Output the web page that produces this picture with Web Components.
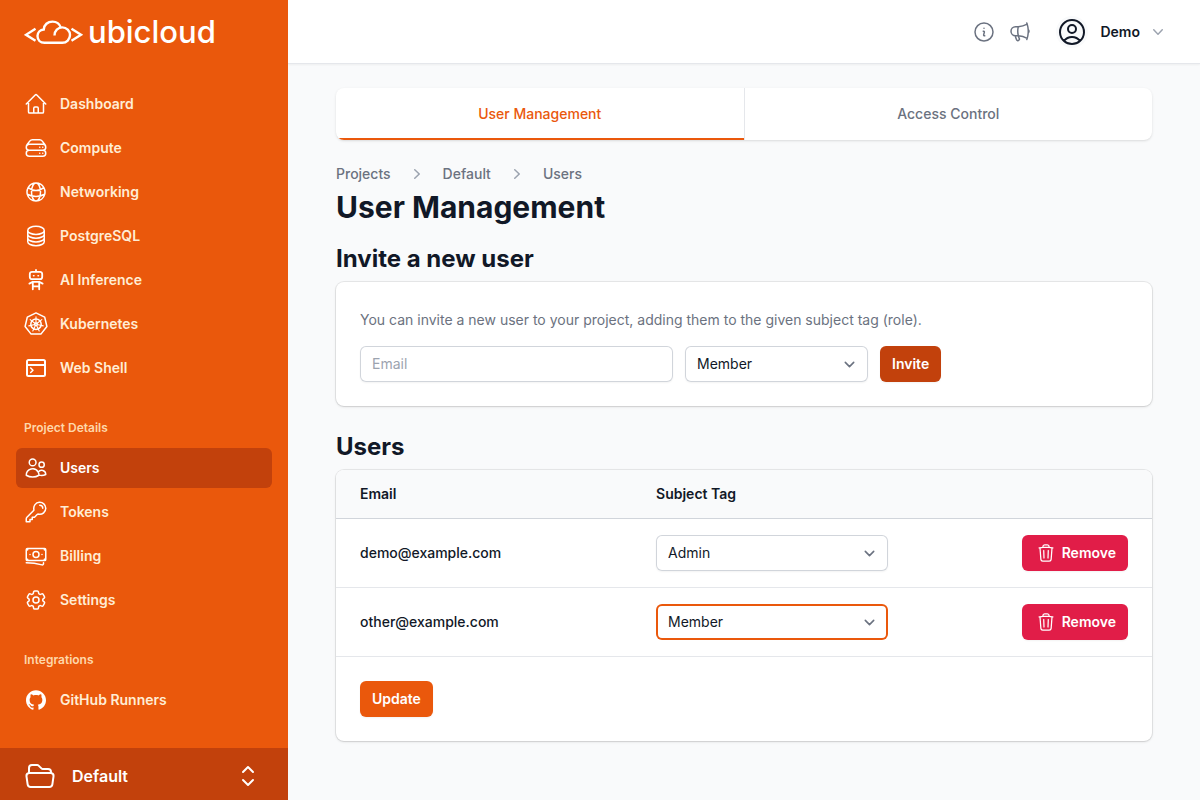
<!DOCTYPE html>
<html lang="en">
<head>
<meta charset="utf-8">
<meta name="viewport" content="width=device-width, initial-scale=1">
<title>Ubicloud - User Management</title>
<style>
body {
    margin: 0;
    background: #f9fafb;
    color: #111827;
    font: 400 14px/20px Inter, "Liberation Sans", sans-serif;
}
</style>
</head>
<body>
<app-shell>
    <side-bar slot="sidebar">
        <nav-group>
            <nav-item icon="home">Dashboard</nav-item>
            <nav-item icon="server">Compute</nav-item>
            <nav-item icon="globe">Networking</nav-item>
            <nav-item icon="database">PostgreSQL</nav-item>
            <nav-item icon="robot">AI Inference</nav-item>
            <nav-item icon="kubernetes">Kubernetes</nav-item>
            <nav-item icon="terminal">Web Shell</nav-item>
        </nav-group>
        <nav-group label="Project Details">
            <nav-item icon="users" active>Users</nav-item>
            <nav-item icon="key">Tokens</nav-item>
            <nav-item icon="banknotes">Billing</nav-item>
            <nav-item icon="cog">Settings</nav-item>
        </nav-group>
        <nav-group label="Integrations">
            <nav-item icon="github">GitHub Runners</nav-item>
        </nav-group>
        <project-switcher slot="footer">Default</project-switcher>
    </side-bar>
    <top-bar slot="header">Demo</top-bar>
    <tab-bar tabs="User Management,Access Control"></tab-bar>
    <page-title crumbs="Projects,Default,Users">User Management</page-title>
    <page-section>
        <span slot="title">Invite a new user</span>
        <invite-form></invite-form>
    </page-section>
    <page-section>
        <span slot="title">Users</span>
        <users-table></users-table>
    </page-section>
</app-shell>

<script>
// Outline icons are stroked, the ones marked solid are filled.
const icons = {
    home: { body: `<path d="M2.25 12l8.954-8.955c.44-.439 1.152-.439 1.591 0L21.75 12M4.5 9.75v10.125c0 .621.504 1.125 1.125 1.125H9.75v-4.875c0-.621.504-1.125 1.125-1.125h2.25c.621 0 1.125.504 1.125 1.125V21h4.125c.621 0 1.125-.504 1.125-1.125V9.75M8.25 21h8.25"/>` },
    server: { body: `<path d="M5.25 14.25h13.5m-13.5 0a3 3 0 01-3-3m3 3a3 3 0 100 6h13.5a3 3 0 100-6m-16.5-3a3 3 0 013-3h13.5a3 3 0 013 3m-19.5 0a4.5 4.5 0 01.9-2.7L5.737 5.1a3.375 3.375 0 012.7-1.35h7.126c1.062 0 2.062.5 2.7 1.35l2.587 3.45a4.5 4.5 0 01.9 2.7m0 0a3 3 0 01-3 3m0 3h.008v.008h-.008v-.008zm0-6h.008v.008h-.008v-.008zm-3 6h.008v.008h-.008v-.008zm0-6h.008v.008h-.008v-.008z"/>` },
    globe: { body: `<path d="M12 21a9.004 9.004 0 008.716-6.747M12 21a9.004 9.004 0 01-8.716-6.747M12 21c2.485 0 4.5-4.03 4.5-9S14.485 3 12 3m0 18c-2.485 0-4.5-4.03-4.5-9S9.515 3 12 3m0 0a8.997 8.997 0 017.843 4.582M12 3a8.997 8.997 0 00-7.843 4.582m15.686 0A11.953 11.953 0 0112 10.5c-2.998 0-5.74-1.1-7.843-2.918m15.686 0A8.959 8.959 0 0121 12c0 .778-.099 1.533-.284 2.253m0 0A17.919 17.919 0 0112 16.5c-3.162 0-6.133-.815-8.716-2.247m0 0A9.015 9.015 0 013 12c0-1.605.42-3.113 1.157-4.418"/>` },
    database: { body: `<path d="M20.25 6.375c0 2.278-3.694 4.125-8.25 4.125S3.75 8.653 3.75 6.375m16.5 0c0-2.278-3.694-4.125-8.25-4.125S3.75 4.097 3.75 6.375m16.5 0v11.25c0 2.278-3.694 4.125-8.25 4.125s-8.25-1.847-8.25-4.125V6.375m16.5 0v3.75m-16.5-3.75v3.75m16.5 0v3.75C20.25 16.153 16.556 18 12 18s-8.25-1.847-8.25-4.125v-3.75m16.5 0c0 2.278-3.694 4.125-8.25 4.125s-8.25-1.847-8.25-4.125"/>` },
    robot: { stroke: 1.8, body: `<path d="M12 2v1.500M8 3.800h8a2.200 2.200 0 012.200 2.200v3a2.200 2.200 0 01-2.200 2.200H8A2.200 2.200 0 015.800 9V6A2.200 2.200 0 018 3.800zM8.800 21.300v-7.500h6.400v7.500M8.800 18.300h6.400M8.800 13.800l-3.400 1.800M15.200 13.800l3.400 1.800"/><path stroke-width="1.500" d="M9.500 7.800h.5M14 7.800h.5"/>` },
    kubernetes: { body: `<path d="M12 .9l8.700 4.200 2.200 9.400-6 7.600H7.100l-6-7.600 2.200-9.400z"/><circle cx="12" cy="12.200" r="5.200"/><circle cx="12" cy="12.200" r="1.300"/><path stroke-width="1.100" d="M12 11V4.800M12.900 11.500l4.900-3.900M13.200 12.500l6 1.400M12.500 13.300l2.700 5.600M11.500 13.300l-2.700 5.600M10.800 12.500l-6 1.400M11.100 11.500L6.200 7.600"/>` },
    terminal: { stroke: 2, body: `<path d="M4.500 4h15A1.500 1.500 0 0121 5.500v13a1.500 1.500 0 01-1.500 1.500h-15A1.500 1.500 0 013 18.500v-13A1.500 1.500 0 014.500 4zM3 9h18"/><path stroke-width="1.500" d="M6.700 12l2.300 2.200-2.300 2.300"/>` },
    users: { body: `<path d="M15 19.128a9.38 9.38 0 002.625.372 9.337 9.337 0 004.121-.952 4.125 4.125 0 00-7.533-2.493M15 19.128v-.003c0-1.113-.285-2.16-.786-3.07M15 19.128v.106A12.318 12.318 0 018.624 21c-2.331 0-4.512-.645-6.374-1.766l-.001-.109a6.375 6.375 0 0111.964-3.07M12 6.375a3.375 3.375 0 11-6.75 0 3.375 3.375 0 016.75 0zm8.25 2.25a2.625 2.625 0 11-5.25 0 2.625 2.625 0 015.25 0z"/>` },
    key: { body: `<path d="M15.75 5.25a3 3 0 013 3m3 0a6 6 0 01-7.029 5.912c-.563-.097-1.159.026-1.563.43L10.5 17.25H8.25v2.25H6v2.25H2.25v-2.818c0-.597.237-1.17.659-1.591l6.499-6.499c.404-.404.527-1 .43-1.563A6 6 0 1121.75 8.25z"/>` },
    banknotes: { body: `<path d="M2.25 18.75a60.07 60.07 0 0115.797 2.101c.727.198 1.453-.342 1.453-1.096V18.75M3.75 4.5v.75A.75.75 0 013 6h-.75m0 0v-.375c0-.621.504-1.125 1.125-1.125H20.25M2.25 6v9m18-10.5v.75c0 .414.336.75.75.75h.75m-1.5-1.5h.375c.621 0 1.125.504 1.125 1.125v9.75c0 .621-.504 1.125-1.125 1.125h-.375m1.5-1.5H21a.75.75 0 00-.75.75v.75m0 0H3.75m0 0h-.375a1.125 1.125 0 01-1.125-1.125V15m1.5 1.5v-.75A.75.75 0 003 15h-.75M15 10.5a3 3 0 11-6 0 3 3 0 016 0zm3 0h.008v.008H18V10.5zm-12 0h.008v.008H6V10.5z"/>` },
    cog: { body: `<path d="M9.594 3.94c.09-.542.56-.94 1.11-.94h2.593c.55 0 1.02.398 1.11.94l.213 1.281c.063.374.313.686.645.87.074.04.147.083.22.127.324.196.72.257 1.075.124l1.217-.456a1.125 1.125 0 011.37.49l1.296 2.247a1.125 1.125 0 01-.26 1.431l-1.003.827c-.293.24-.438.613-.431.992a6.759 6.759 0 010 .255c-.007.378.138.75.43.99l1.005.828c.424.35.534.954.26 1.43l-1.298 2.247a1.125 1.125 0 01-1.369.491l-1.217-.456c-.355-.133-.75-.072-1.076.124a6.57 6.57 0 01-.22.128c-.331.183-.581.495-.644.869l-.213 1.28c-.09.543-.56.941-1.11.941h-2.594c-.55 0-1.02-.398-1.11-.94l-.213-1.281c-.062-.374-.312-.686-.644-.87a6.52 6.52 0 01-.22-.127c-.325-.196-.72-.257-1.076-.124l-1.217.456a1.125 1.125 0 01-1.369-.49l-1.297-2.247a1.125 1.125 0 01.26-1.431l1.004-.827c.292-.24.437-.613.43-.992a6.932 6.932 0 010-.255c.007-.378-.138-.75-.43-.99l-1.004-.828a1.125 1.125 0 01-.26-1.43l1.297-2.247a1.125 1.125 0 011.37-.491l1.216.456c.356.133.751.072 1.076-.124.072-.044.146-.087.22-.128.332-.183.582-.495.644-.869l.214-1.281z"/><path d="M15 12a3 3 0 11-6 0 3 3 0 016 0z"/>` },
    github: { solid: true, box: "-2.4 -2.4 28.8 28.8", body: `<path d="M12 .297c-6.630 0-12 5.373-12 12 0 5.303 3.438 9.800 8.205 11.385.6.113.82-.258.82-.577 0-.285-.010-1.040-.015-2.040-3.338.724-4.042-1.610-4.042-1.610C4.422 18.070 3.633 17.700 3.633 17.700c-1.087-.744.084-.729.084-.729 1.205.084 1.838 1.236 1.838 1.236 1.070 1.835 2.809 1.305 3.495.998.108-.776.417-1.305.760-1.605-2.665-.3-5.466-1.332-5.466-5.930 0-1.310.465-2.380 1.235-3.220-.135-.303-.540-1.523.105-3.176 0 0 1.005-.322 3.300 1.230.960-.267 1.980-.399 3-.405 1.020.006 2.040.138 3 .405 2.280-1.552 3.285-1.230 3.285-1.230.645 1.653.240 2.873.120 3.176.765.840 1.230 1.910 1.230 3.220 0 4.610-2.805 5.625-5.475 5.920.420.360.810 1.096.810 2.220 0 1.606-.015 2.896-.015 3.286 0 .315.210.690.825.570C20.565 22.092 24 17.592 24 12.297c0-6.627-5.373-12-12-12"/>` },
    folder: { body: `<path d="M3.75 9.776c.112-.017.227-.026.344-.026h15.812c.117 0 .232.009.344.026m-16.5 0a2.25 2.25 0 00-1.883 2.542l.857 6a2.25 2.25 0 002.227 1.932H19.05a2.25 2.25 0 002.227-1.932l.857-6a2.25 2.25 0 00-1.883-2.542m-16.5 0V6A2.25 2.25 0 016 3.75h3.879a1.5 1.5 0 011.06.44l2.122 2.12a1.5 1.5 0 001.06.44H18A2.25 2.25 0 0120.25 9v.776"/>` },
    "up-down": { body: `<path d="M8.25 15L12 18.75 15.75 15m-7.5-6L12 5.25 15.75 9"/>` },
    info: { body: `<path d="M11.25 11.25l.041-.02a.75.75 0 011.063.852l-.708 2.836a.75.75 0 001.063.853l.041-.021M21 12a9 9 0 11-18 0 9 9 0 0118 0zm-9-3.75h.008v.008H12V8.25z"/>` },
    megaphone: { body: `<path d="M10.34 15.84c-.688-.06-1.386-.09-2.09-.09H7.5a4.5 4.5 0 110-9h.75c.704 0 1.402-.03 2.09-.09m0 9.18c.253.962.584 1.892.985 2.783.247.55.06 1.21-.463 1.511l-.657.38c-.551.318-1.26.117-1.527-.461a20.845 20.845 0 01-1.44-4.282m3.102.069a18.03 18.03 0 01-.59-4.59c0-1.586.205-3.124.59-4.59m0 9.18a23.848 23.848 0 018.835 2.535M10.34 6.66a23.847 23.847 0 008.835-2.535m0 0A23.74 23.74 0 0018.795 3m.38 1.125a23.91 23.91 0 011.014 5.395m-1.014 8.855c-.118.38-.245.754-.38 1.125m.38-1.125a23.91 23.91 0 001.014-5.395m0-3.46c.495.413.811 1.035.811 1.73 0 .695-.316 1.317-.811 1.73m0-3.46a24.347 24.347 0 010 3.46"/>` },
    user: { body: `<path d="M17.982 18.725A7.488 7.488 0 0012 15.75a7.488 7.488 0 00-5.982 2.975m11.963 0a9 9 0 10-11.963 0m11.963 0A8.966 8.966 0 0112 21a8.966 8.966 0 01-5.982-2.275M15 9.75a3 3 0 11-6 0 3 3 0 016 0z"/>` },
    trash: { body: `<path d="M14.74 9l-.346 9m-4.788 0L9.26 9m9.968-3.21c.342.052.682.107 1.022.166m-1.022-.165L18.16 19.673a2.25 2.25 0 01-2.244 2.077H8.084a2.25 2.25 0 01-2.244-2.077L4.772 5.79m14.456 0a48.108 48.108 0 00-3.478-.397m-12 .562c.34-.059.68-.114 1.022-.165m0 0a48.11 48.11 0 013.478-.397m7.5 0v-.916c0-1.18-.91-2.164-2.09-2.201a51.964 51.964 0 00-3.32 0c-1.18.037-2.09 1.022-2.09 2.201v.916m7.5 0a48.667 48.667 0 00-7.5 0"/>` },
    "chevron-down": { solid: true, box: "0 0 20 20", body: `<path d="M5.23 7.21a.75.75 0 011.06.02L10 11.168l3.71-3.938a.75.75 0 111.08 1.04l-4.25 4.5a.75.75 0 01-1.08 0l-4.25-4.5a.75.75 0 01.02-1.06z"/>` },
    "chevron-right": { solid: true, box: "0 0 20 20", body: `<path d="M7.21 14.77a.75.75 0 01.02-1.06L11.168 10 7.23 6.29a.75.75 0 111.04-1.08l4.5 4.25a.75.75 0 010 1.08l-4.5 4.25a.75.75 0 01-1.06-.02z"/>` },
    caret: { box: "0 0 20 20", body: `<path d="M6 8l4 4 4-4"/>` },
};

class UiIcon extends HTMLElement {
    connectedCallback() {
        const { body, solid, box = "0 0 24 24", stroke = 1.5 } = icons[this.getAttribute("name")];
        const paint = solid
            ? `fill="currentColor"`
            : `fill="none" stroke="currentColor" stroke-width="${stroke}" stroke-linecap="round" stroke-linejoin="round"`;
        this.attachShadow({ mode: "open" }).innerHTML = `
          <style>
          :host {
            display: block;
            flex: none;
            width: var(--icon-size, 24px);
            height: var(--icon-size, 24px);
          }
          svg {
            display: block;
            width: 100%;
            height: 100%;
          }
          </style>
          <svg viewBox="${box}" ${paint} aria-hidden="true">${body}</svg>
        `;
    }
}

class AppShell extends HTMLElement {
    connectedCallback() {
        this.attachShadow({ mode: "open" }).innerHTML = `
          <style>
          :host {
            display: grid;
            grid-template-columns: 288px minmax(0, 1fr);
            min-height: 100vh;
          }
          main {
            padding: 24px 48px;
          }
          </style>
          <slot name="sidebar"></slot>
          <div>
            <slot name="header"></slot>
            <main><slot></slot></main>
          </div>
        `;
    }
}

class SideBar extends HTMLElement {
    connectedCallback() {
        this.attachShadow({ mode: "open" }).innerHTML = `
          <style>
          :host {
            display: flex;
            flex-direction: column;
            position: sticky;
            top: 0;
            box-sizing: border-box;
            height: 100vh;
            background: #ea580c;
          }
          .logo {
            display: flex;
            align-items: center;
            gap: 4px;
            flex: none;
            height: 64px;
            padding: 0 24px;
            color: #fff;
            font-size: 31px;
            font-weight: 500;
            line-height: 36px;
            text-decoration: none;
          }
          nav {
            display: flex;
            flex: 1;
            flex-direction: column;
            gap: 28px;
            min-height: 0;
            overflow-y: auto;
            padding: 20px 16px 0;
          }
          </style>
          <a class="logo" href="#">
            <svg width="60" height="28" viewBox="0 0 60 28" fill="none" stroke="#fff" stroke-width="2.4" aria-hidden="true">
              <path d="M11.500 10.800L2 16.800l9.500 6M47.500 10.800l9.500 6-9.500 6"/>
              <path d="M30.500 17.500c0-4.700 3.500-8.100 7.800-8.100a7.600 7.600 0 010 15.400H20.500c-4.300 0-7-3-7-6.700 0-3.500 2.600-6.300 6.300-6.600.2-4.800 3.900-7.900 8.700-7.900 4.200 0 7.200 2.500 8.500 6.200"/>
            </svg>
            ubicloud
          </a>
          <nav><slot></slot></nav>
          <slot name="footer"></slot>
        `;
    }
}

class NavGroup extends HTMLElement {
    connectedCallback() {
        const label = this.getAttribute("label");
        this.attachShadow({ mode: "open" }).innerHTML = `
          <style>
          :host {
            display: block;
          }
          .label {
            padding: 0 8px 8px;
            color: #fed7aa;
            font-size: 12px;
            font-weight: 600;
            line-height: 24px;
          }
          .items {
            display: flex;
            flex-direction: column;
            gap: 4px;
          }
          </style>
          ${label ? `<div class="label">${label}</div>` : ""}
          <div class="items"><slot></slot></div>
        `;
    }
}

class NavItem extends HTMLElement {
    connectedCallback() {
        this.attachShadow({ mode: "open" }).innerHTML = `
          <style>
          :host {
            display: block;
          }
          a {
            display: flex;
            align-items: center;
            gap: 12px;
            padding: 8px;
            border-radius: 6px;
            color: #ffedd5;
            font-weight: 600;
            line-height: 24px;
            text-decoration: none;
          }
          ui-icon {
            color: #fff;
          }
          a:hover,
          :host([active]) a {
            background: #c2410c;
            color: #fff;
          }
          </style>
          <a href="#"><ui-icon name="${this.getAttribute("icon")}"></ui-icon><slot></slot></a>
        `;
    }
}

class ProjectSwitcher extends HTMLElement {
    connectedCallback() {
        this.attachShadow({ mode: "open" }).innerHTML = `
          <style>
          :host {
            display: block;
            --icon-size: 32px;
          }
          button {
            display: flex;
            align-items: center;
            gap: 16px;
            width: 100%;
            padding: 12px 24px 8px;
            border: 0;
            background: #c2410c;
            color: #fff;
            font: inherit;
            font-size: 16px;
            font-weight: 600;
            line-height: 24px;
            text-align: left;
          }
          span {
            flex: 1;
          }
          </style>
          <button type="button">
            <ui-icon name="folder"></ui-icon>
            <span><slot></slot></span>
            <ui-icon name="up-down"></ui-icon>
          </button>
        `;
    }
}

class TopBar extends HTMLElement {
    connectedCallback() {
        this.attachShadow({ mode: "open" }).innerHTML = `
          <style>
          :host {
            display: flex;
            align-items: center;
            justify-content: flex-end;
            gap: 12px;
            box-sizing: border-box;
            height: 64px;
            padding: 0 32px;
            border-bottom: 1px solid #e5e7eb;
            background: #fff;
            box-shadow: 0 1px 2px rgb(0 0 0 / 5%);
          }
          a {
            color: #6b7280;
          }
          button {
            display: flex;
            align-items: center;
            margin-left: 12px;
            padding: 0;
            border: 0;
            background: none;
            color: #111827;
            font: inherit;
            font-weight: 600;
            line-height: 24px;
          }
          span {
            margin: 0 8px 0 12px;
          }
          .avatar {
            --icon-size: 32px;
            border-radius: 50%;
            background: #f9fafb;
          }
          .chevron {
            --icon-size: 20px;
            color: #9ca3af;
          }
          </style>
          <a href="#" aria-label="Documentation"><ui-icon name="info"></ui-icon></a>
          <a href="#" aria-label="News"><ui-icon name="megaphone"></ui-icon></a>
          <button type="button">
            <ui-icon class="avatar" name="user"></ui-icon>
            <span><slot></slot></span>
            <ui-icon class="chevron" name="chevron-down"></ui-icon>
          </button>
        `;
    }
}

class TabBar extends HTMLElement {
    connectedCallback() {
        const tabs = this.getAttribute("tabs").split(",");
        this.attachShadow({ mode: "open" }).innerHTML = `
          <style>
          :host {
            display: block;
          }
          nav {
            display: flex;
            overflow: hidden;
            border-radius: 8px;
            background: #fff;
            box-shadow: 0 1px 3px rgb(0 0 0 / 10%), 0 1px 2px -1px rgb(0 0 0 / 10%);
          }
          a {
            flex: 1;
            padding: 16px;
            color: #6b7280;
            font-weight: 500;
            text-align: center;
            text-decoration: none;
          }
          a + a {
            border-left: 1px solid #e5e7eb;
          }
          a[aria-current] {
            box-shadow: inset 0 -2px #ea580c;
            color: #ea580c;
          }
          </style>
          <nav>
            ${tabs.map((tab, i) => `<a href="#"${i === 0 ? ` aria-current="page"` : ""}>${tab}</a>`).join("")}
          </nav>
        `;
    }
}

class PageTitle extends HTMLElement {
    connectedCallback() {
        const crumbs = this.getAttribute("crumbs").split(",");
        this.attachShadow({ mode: "open" }).innerHTML = `
          <style>
          :host {
            display: block;
            margin: 24px 0 20px;
          }
          nav {
            display: flex;
            align-items: center;
            gap: 16px;
            --icon-size: 20px;
          }
          a {
            color: #6b7280;
            font-weight: 500;
            text-decoration: none;
          }
          ui-icon {
            color: #9ca3af;
          }
          h1 {
            margin: 8px 0 0;
            font-size: 30px;
            font-weight: 700;
            line-height: 30px;
          }
          </style>
          <nav aria-label="Breadcrumb">
            ${crumbs.map((crumb) => `<a href="#">${crumb}</a>`).join(`<ui-icon name="chevron-right"></ui-icon>`)}
          </nav>
          <h1><slot></slot></h1>
        `;
    }
}

class PageSection extends HTMLElement {
    connectedCallback() {
        this.attachShadow({ mode: "open" }).innerHTML = `
          <style>
          :host {
            display: block;
            margin-bottom: 24px;
          }
          h2 {
            margin: 0 0 6px;
            font-size: 24px;
            font-weight: 700;
            line-height: 34px;
          }
          .card {
            overflow: hidden;
            border-radius: 8px;
            background: #fff;
            box-shadow: 0 0 0 1px rgb(0 0 0 / 7%), 0 1px 3px rgb(0 0 0 / 10%), 0 1px 2px -1px rgb(0 0 0 / 10%);
          }
          </style>
          <h2><slot name="title"></slot></h2>
          <div class="card"><slot></slot></div>
        `;
    }
}

class UiButton extends HTMLElement {
    connectedCallback() {
        const icon = this.getAttribute("icon");
        this.attachShadow({ mode: "open" }).innerHTML = `
          <style>
          :host {
            display: inline-flex;
            --icon-size: 20px;
          }
          button {
            display: flex;
            align-items: center;
            gap: 4px;
            padding: 8px 12px;
            border: 0;
            border-radius: 6px;
            background: #ea580c;
            box-shadow: 0 1px 2px rgb(0 0 0 / 5%);
            color: #fff;
            font: inherit;
            font-weight: 600;
          }
          button:hover,
          :host([pressed]) button {
            background: #c2410c;
          }
          :host([danger]) button {
            background: #e11d48;
          }
          ui-icon {
            padding: 0 2px;
          }
          </style>
          <button type="button">${icon ? `<ui-icon name="${icon}"></ui-icon>` : ""}<slot></slot></button>
        `;
    }
}

class UiInput extends HTMLElement {
    connectedCallback() {
        const label = this.getAttribute("label");
        this.attachShadow({ mode: "open" }).innerHTML = `
          <style>
          :host {
            display: block;
          }
          input {
            display: block;
            box-sizing: border-box;
            width: 100%;
            height: 36px;
            padding: 7px 12px 9px;
            border: 0;
            border-radius: 6px;
            outline: 0;
            background: #fff;
            box-shadow: inset 0 0 0 1px #d1d5db, 0 1px 2px rgb(0 0 0 / 5%);
            color: inherit;
            font: inherit;
          }
          input::placeholder {
            color: #9ca3af;
          }
          input:focus {
            box-shadow: inset 0 0 0 2px #ea580c;
          }
          </style>
          <input type="email" placeholder="${label}" aria-label="${label}">
        `;
    }
}

class UiSelect extends HTMLElement {
    connectedCallback() {
        const value = this.getAttribute("value");
        const options = ["Admin", "Member"];
        this.attachShadow({ mode: "open" }).innerHTML = `
          <style>
          :host {
            display: grid;
            align-items: center;
            --icon-size: 21px;
          }
          select,
          ui-icon {
            grid-area: 1 / 1;
          }
          select {
            appearance: none;
            width: 100%;
            height: 36px;
            padding: 0 40px 0 12px;
            border: 0;
            border-radius: 6px;
            outline: 0;
            background: #fff;
            box-shadow: inset 0 0 0 1px #d1d5db, 0 1px 2px rgb(0 0 0 / 5%);
            color: #111827;
            font: inherit;
            font-weight: 400;
          }
          select:focus,
          :host([highlighted]) select {
            box-shadow: inset 0 0 0 2px #ea580c;
          }
          ui-icon {
            justify-self: end;
            margin-right: 8px;
            color: #6b7280;
            pointer-events: none;
          }
          </style>
          <select aria-label="${this.getAttribute("label")}">
            ${options.map((o) => `<option${o === value ? " selected" : ""}>${o}</option>`).join("")}
          </select>
          <ui-icon name="caret"></ui-icon>
        `;
    }
}

class InviteForm extends HTMLElement {
    connectedCallback() {
        this.attachShadow({ mode: "open" }).innerHTML = `
          <style>
          :host {
            display: block;
            padding: 24px;
          }
          p {
            margin: 0 0 12px;
            color: #6b7280;
            line-height: 28px;
          }
          form {
            display: grid;
            grid-template-columns: repeat(12, minmax(0, 1fr));
            gap: 12px;
          }
          ui-input {
            grid-column: span 5;
          }
          ui-select {
            grid-column: span 3;
          }
          ui-button {
            grid-column: span 2;
          }
          </style>
          <p>You can invite a new user to your project, adding them to the given subject tag (role).</p>
          <form>
            <ui-input label="Email"></ui-input>
            <ui-select label="Subject Tag" value="Member"></ui-select>
            <ui-button pressed>Invite</ui-button>
          </form>
        `;
    }
}

class UsersTable extends HTMLElement {
    users = [
        { email: "demo@example.com", tag: "Admin" },
        { email: "other@example.com", tag: "Member", changed: true },
    ];

    connectedCallback() {
        this.attachShadow({ mode: "open" }).innerHTML = `
          <style>
          :host {
            display: block;
          }
          table {
            width: 100%;
            border-spacing: 0;
            table-layout: fixed;
          }
          th,
          td {
            border-bottom: 1px solid #e5e7eb;
            text-align: left;
          }
          th {
            padding: 14px 12px;
            border-color: #d1d5db;
            background: #f9fafb;
            font-weight: 600;
          }
          td {
            padding: 16px 12px;
            font-weight: 500;
          }
          th:first-child,
          td:first-child {
            width: 37.75%;
            box-sizing: border-box;
            padding-left: 24px;
          }
          th:nth-child(2) {
            width: 31.4%;
            box-sizing: border-box;
          }
          td:last-child {
            padding-right: 24px;
            text-align: right;
          }
          ui-button {
            vertical-align: top;
          }
          footer {
            display: flex;
            padding: 24px;
          }
          </style>
          <table>
            <thead>
              <tr><th>Email</th><th>Subject Tag</th><th aria-label="Actions"></th></tr>
            </thead>
            <tbody>${this.users.map((user) => this.row(user)).join("")}</tbody>
          </table>
          <footer><ui-button>Update</ui-button></footer>
        `;
    }

    row({ email, tag, changed }) {
        return `
          <tr>
            <td>${email}</td>
            <td><ui-select label="Subject Tag of ${email}" value="${tag}"${changed ? " highlighted" : ""}></ui-select></td>
            <td><ui-button danger icon="trash">Remove</ui-button></td>
          </tr>
        `;
    }
}

customElements.define("ui-icon", UiIcon);
customElements.define("ui-button", UiButton);
customElements.define("ui-input", UiInput);
customElements.define("ui-select", UiSelect);
customElements.define("nav-item", NavItem);
customElements.define("nav-group", NavGroup);
customElements.define("project-switcher", ProjectSwitcher);
customElements.define("side-bar", SideBar);
customElements.define("top-bar", TopBar);
customElements.define("tab-bar", TabBar);
customElements.define("page-title", PageTitle);
customElements.define("page-section", PageSection);
customElements.define("invite-form", InviteForm);
customElements.define("users-table", UsersTable);
customElements.define("app-shell", AppShell);
</script>
</body>
</html>
